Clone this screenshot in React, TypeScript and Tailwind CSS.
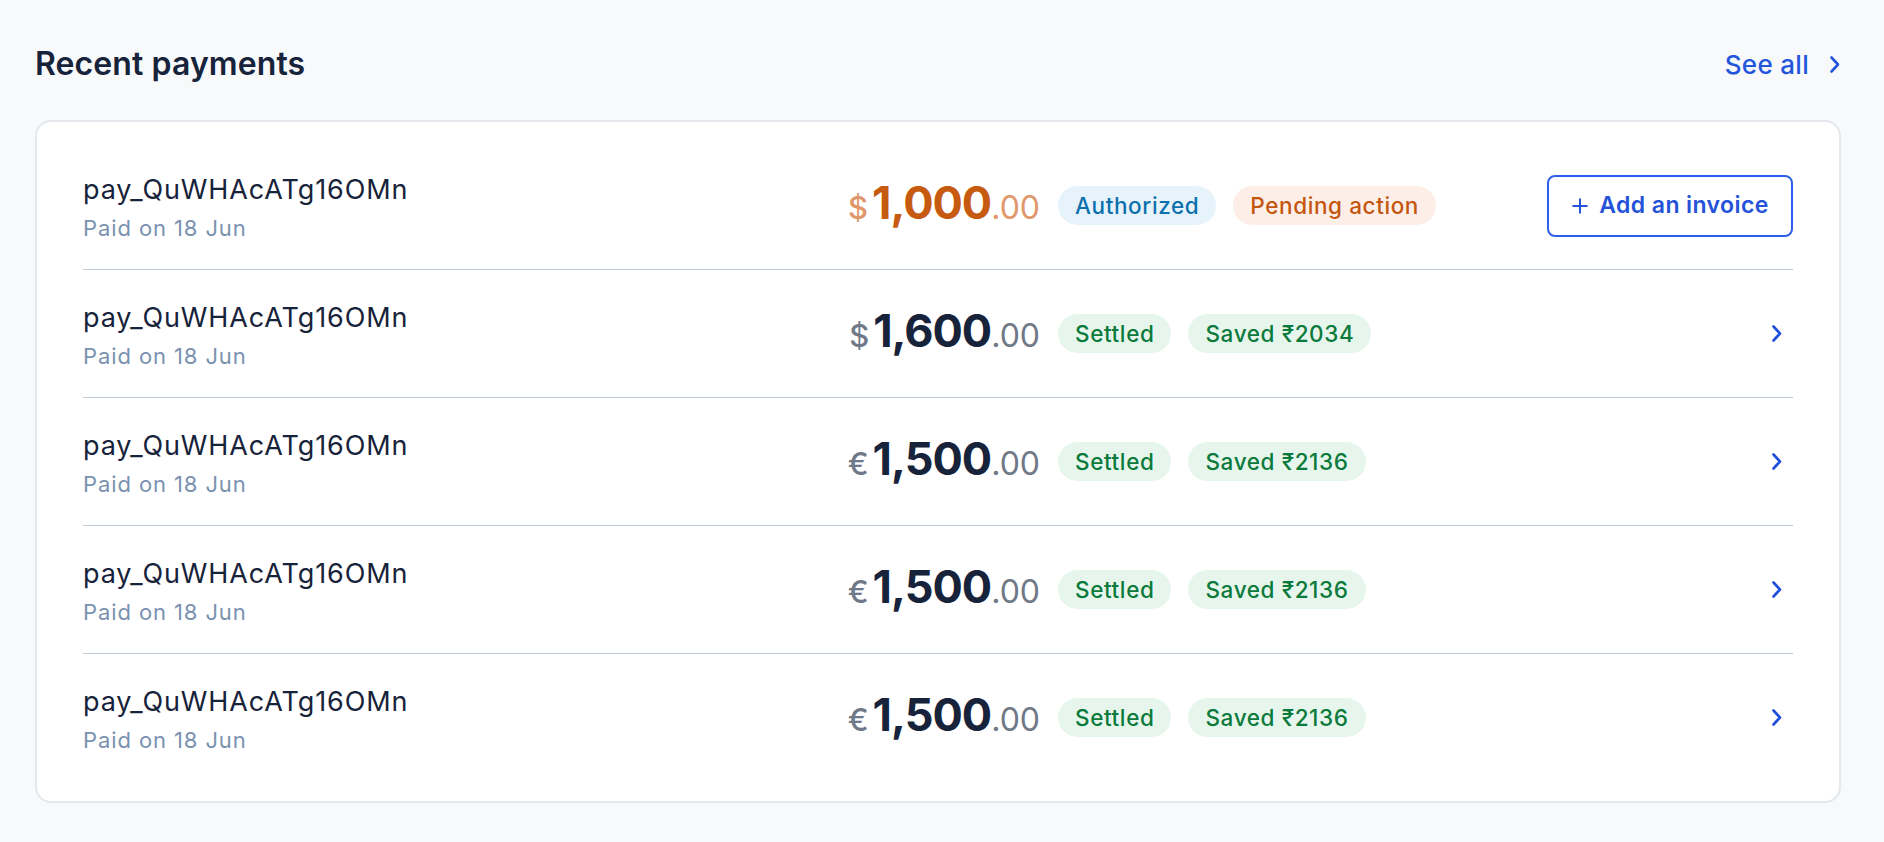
import { Fragment } from 'react'

type Badge = { label: string; tone: 'blue' | 'orange' | 'green' }

interface Payment {
  id: string
  paidOn: string
  currency: string
  whole: string
  cents: string
  pending?: boolean
  badges: Badge[]
}

const payments: Payment[] = [
  {
    id: 'pay_QuWHAcATg16OMn',
    paidOn: 'Paid on 18 Jun',
    currency: '$',
    whole: '1,000',
    cents: '.00',
    pending: true,
    badges: [
      { label: 'Authorized', tone: 'blue' },
      { label: 'Pending action', tone: 'orange' },
    ],
  },
  {
    id: 'pay_QuWHAcATg16OMn',
    paidOn: 'Paid on 18 Jun',
    currency: '$',
    whole: '1,600',
    cents: '.00',
    badges: [
      { label: 'Settled', tone: 'green' },
      { label: 'Saved ₹2034', tone: 'green' },
    ],
  },
  {
    id: 'pay_QuWHAcATg16OMn',
    paidOn: 'Paid on 18 Jun',
    currency: '€',
    whole: '1,500',
    cents: '.00',
    badges: [
      { label: 'Settled', tone: 'green' },
      { label: 'Saved ₹2136', tone: 'green' },
    ],
  },
  {
    id: 'pay_QuWHAcATg16OMn',
    paidOn: 'Paid on 18 Jun',
    currency: '€',
    whole: '1,500',
    cents: '.00',
    badges: [
      { label: 'Settled', tone: 'green' },
      { label: 'Saved ₹2136', tone: 'green' },
    ],
  },
  {
    id: 'pay_QuWHAcATg16OMn',
    paidOn: 'Paid on 18 Jun',
    currency: '€',
    whole: '1,500',
    cents: '.00',
    badges: [
      { label: 'Settled', tone: 'green' },
      { label: 'Saved ₹2136', tone: 'green' },
    ],
  },
]

const toneClass: Record<Badge['tone'], string> = {
  blue: 'bg-[#e7f3fb] text-[#0b70ad]',
  orange: 'bg-[#fdefe7] text-[#c4560f]',
  green: 'bg-[#e7f6ed] text-[#0b7a3c]',
}

function Chevron({ className }: { className?: string }) {
  return (
    <svg width="12" height="19" viewBox="0 0 12 19" fill="none" className={className}>
      <path d="M2.5 2.5 L9 9.5 L2.5 16.5" stroke="currentColor" strokeWidth="2.6" strokeLinecap="round" strokeLinejoin="round" />
    </svg>
  )
}

export default function App() {
  return (
    <div className="min-h-screen bg-[#f8f9fb] pl-[35px] pr-[43px] pt-[44px] font-['Inter',sans-serif]">
      {/* Header */}
      <div className="flex h-[40px] items-center justify-between">
        <h2 className="text-[32px] font-semibold tracking-[0.1px] text-[#17233a]">Recent payments</h2>
        <button className="flex items-center gap-[20px] text-[26px] font-medium tracking-[0.3px] text-[#2456dc]">
          See all
          <Chevron className="text-[#2456dc]" />
        </button>
      </div>

      {/* Card */}
      <div className="mt-[36px] rounded-[16px] border-2 border-[#e4e7ec] bg-white px-[46px] py-[20px]">
        {payments.map((p, i) => (
          <Fragment key={i}>
            <div className="flex h-[127px] items-center">
              <div className="w-[757px] shrink-0 pt-[5px]">
                <div className="text-[27px] leading-[34px] tracking-[0.9px] text-[#17233a]">{p.id}</div>
                <div className="mt-[6px] text-[22px] leading-[30px] tracking-[0.9px] text-[#7a92b0]">{p.paidOn}</div>
              </div>

              <div className="flex w-[200px] items-baseline justify-end">
                <span
                  className={`mr-[4px] text-[31px] font-medium ${
                    p.pending ? 'text-[#e0976a]' : 'text-[#6f7988]'
                  }`}
                >
                  {p.currency}
                </span>
                <span
                  className={`text-[45px] font-bold leading-none tracking-[-1px] ${
                    p.pending ? 'text-[#c65a10]' : 'text-[#17233a]'
                  }`}
                >
                  {p.whole}
                </span>
                <span className={`text-[32px] ${p.pending ? 'text-[#e0976a]' : 'text-[#6f7988]'}`}>{p.cents}</span>
              </div>

              <div className="ml-[18px] flex gap-[17px]">
                {p.badges.map((b) => (
                  <span
                    key={b.label}
                    className={`flex h-[39px] items-center rounded-full px-[17px] text-[22.5px] font-medium tracking-[0.6px] ${toneClass[b.tone]}`}
                  >
                    {b.label}
                  </span>
                ))}
              </div>

              <div className="ml-auto">
                {p.pending ? (
                  <button className="flex h-[62px] w-[246px] items-center justify-center gap-[10px] rounded-[8px] border-2 border-[#2f60ea] text-[23px] font-semibold tracking-[0.4px] text-[#2452d8]">
                    <svg width="18" height="18" viewBox="0 0 18 18" fill="none">
                      <path d="M9 1.5 V16.5 M1.5 9 H16.5" stroke="currentColor" strokeWidth="2" />
                    </svg>
                    Add an invoice
                  </button>
                ) : (
                  <Chevron className="mr-[10px] text-[#1f4fdc]" />
                )}
              </div>
            </div>
            {i < payments.length - 1 && <div className="h-px bg-[#bccada]" />}
          </Fragment>
        ))}
      </div>
    </div>
  )
}
